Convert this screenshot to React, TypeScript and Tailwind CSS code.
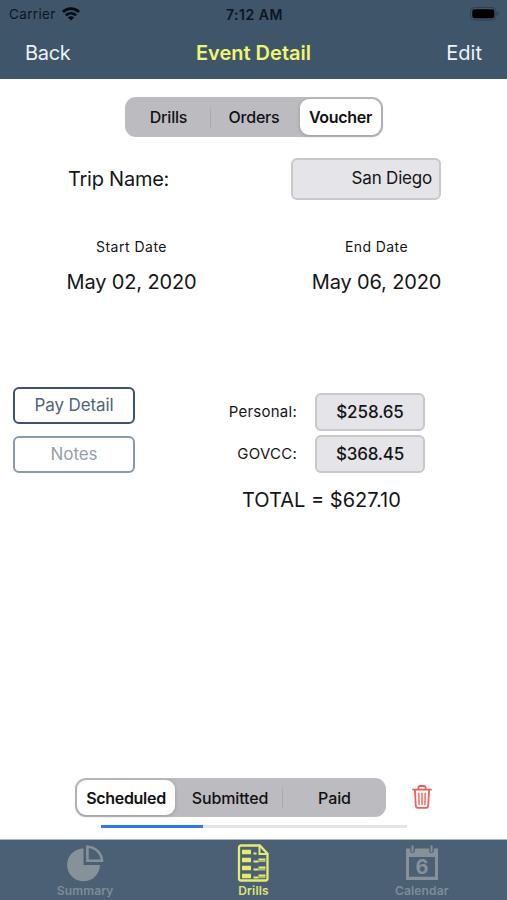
import { useState } from "react";
import { clsx } from "clsx";

type SegmentProps = {
  items: { label: string; width: string; text: string }[];
  value: string;
  onChange: (value: string) => void;
  className?: string;
};

function SegmentedControl({ items, value, onChange, className }: SegmentProps) {
  const active = items.findIndex((item) => item.label === value);

  return (
    <div className={clsx("flex rounded-[11px] bg-[#bcbbc0] p-[2px]", className)}>
      {items.map((item, index) => (
        <div key={item.label} className={clsx("flex items-center", item.width)}>
          <button
            type="button"
            onClick={() => onChange(item.label)}
            className={clsx(
              "h-full min-w-0 flex-1 whitespace-nowrap rounded-[9px] text-[16px] text-[#111113]",
              item.text,
              index === active
                ? "bg-white font-semibold shadow-[0_1px_4px_rgba(0,0,0,0.18)]"
                : "font-medium",
            )}
          >
            {item.label}
          </button>
          {index < items.length - 1 && index !== active && index + 1 !== active && (
            <span className="h-[21px] w-px bg-[#adacb2]" />
          )}
        </div>
      ))}
    </div>
  );
}

function WifiIcon() {
  return (
    <svg width="18" height="14" viewBox="0 0 18 14" fill="none">
      <path d="M1 5a11.4 11.4 0 0 1 16 0" stroke="#050a10" strokeWidth="2.7" />
      <path d="M3.9 8.3a7.2 7.2 0 0 1 10.2 0" stroke="#050a10" strokeWidth="2.4" />
      <path d="M9 13.6 5.9 10.5a4.4 4.4 0 0 1 6.2 0Z" fill="#050a10" />
    </svg>
  );
}

function BatteryIcon() {
  return (
    <svg width="30" height="14" viewBox="0 0 30 14">
      <rect x="0.5" y="0.5" width="25.5" height="12.5" rx="4" fill="none" stroke="#2f4051" />
      <rect x="2.3" y="2.3" width="22" height="9" rx="2.2" fill="#000" />
      <path d="M27.3 4.8c1.7.5 1.7 3.4 0 3.9Z" fill="#2a3a4b" />
    </svg>
  );
}

function TrashIcon() {
  return (
    <svg width="20" height="24" viewBox="0 0 20 24" fill="none" stroke="#ee5f57" strokeWidth="1.8" strokeLinecap="round" strokeLinejoin="round">
      <path d="M1 4.6h18" />
      <path d="M6.4 4.4V2.7c0-1.1.6-1.7 1.7-1.7h3.8c1.1 0 1.7.6 1.7 1.7v1.7" />
      <path d="m2.9 4.8.9 16c.1 1.4.8 2.1 2.1 2.1h8.2c1.3 0 2-.7 2.1-2.1l.9-16" />
      <path d="m6.8 8.2.3 11.4M10 8.2v11.4M13.2 8.2l-.3 11.4" strokeWidth="1.4" />
    </svg>
  );
}

function SummaryIcon() {
  return (
    <svg width="38" height="37" viewBox="0 0 38 37">
      <path d="M17.5 3.5v16.4h16.4A16.4 16.4 0 1 1 17.5 3.5Z" fill="#86919a" />
      <path d="M21.4 1.7v14h14.6c-.4-7.8-6.8-13.7-14.6-14Z" fill="none" stroke="#86919a" strokeWidth="2.6" />
    </svg>
  );
}

function DrillsIcon() {
  return (
    <svg width="33" height="38" viewBox="0 0 33 38" fill="none" stroke="#e5eb70">
      <path d="M4 1.5h18.8l7.7 8.2v24.8a2 2 0 0 1-2 2H4a2 2 0 0 1-2-2v-31a2 2 0 0 1 2-2Z" strokeWidth="2.3" />
      <path d="M22.5 2v8h8" strokeWidth="2" />
      <path d="M5 8h9M5 16h9M5 24h9M5 32h9" strokeWidth="4.4" />
      <path d="M16.5 9.5h3M16.5 17.5h5M21.5 15.3h7M16.5 25.5h5M21.5 23.5h7M16.5 33.5h5M21.5 31.5h7" strokeWidth="1.8" />
      <path d="M21.5 17.2h7M21.5 25.5h7M21.5 33.3h7" strokeWidth="1.8" opacity=".65" />
    </svg>
  );
}

function CalendarIcon() {
  return (
    <svg width="34" height="36" viewBox="0 0 34 36">
      <path
        d="M1 3.5h4.2v2.2c0 3.2 4.6 3.2 4.6 0V3.5h14.4v2.2c0 3.2 4.6 3.2 4.6 0V3.5H33V35H1ZM4 12v19.8h26V12Z"
        fill="#86919a"
        fillRule="evenodd"
      />
      <path d="M7.5 1.3v5M26.5 1.3v5" stroke="#86919a" strokeWidth="2" strokeLinecap="round" />
      <text x="17" y="29.2" textAnchor="middle" fontSize="20" fontWeight="700" fontFamily="Inter, sans-serif" fill="#86919a">
        6
      </text>
    </svg>
  );
}

const tripTabs = [
  { label: "Drills", width: "w-[84px]", text: "tracking-[-0.2px]" },
  { label: "Orders", width: "w-[89px]", text: "pr-[3px] tracking-[-0.2px]" },
  { label: "Voucher", width: "w-[81px]", text: "tracking-[-0.3px]" },
];

const statusTabs = [
  { label: "Scheduled", width: "w-[98px]", text: "tracking-[-0.3px]" },
  { label: "Submitted", width: "w-[108px]", text: "pl-[3px] tracking-[-0.15px]" },
  { label: "Paid", width: "w-[101px]", text: "pl-[2px] tracking-[-0.1px]" },
];

const statusProgress: Record<string, number> = { Scheduled: 33.3, Submitted: 66.6, Paid: 100 };

export default function App() {
  const [tab, setTab] = useState("Voucher");
  const [status, setStatus] = useState("Scheduled");

  return (
    <div className="flex h-[900px] w-[507px] flex-col overflow-hidden bg-white font-[Inter,sans-serif] text-[#151517]">
      <header className="h-[79px] bg-[#3e556a]">
        <div className="grid h-7 grid-cols-3 items-center pl-[9px] pr-[7px] text-[13.5px] text-[#0d151e]">
          <div className="flex items-center gap-[6px]">
            <span className="tracking-[0.35px]">Carrier</span>
            <WifiIcon />
          </div>
          <span className="text-center text-[14px] font-semibold tracking-[0.55px]">7:12 AM</span>
          <div className="flex justify-end">
            <BatteryIcon />
          </div>
        </div>
        <div className="grid h-[49px] grid-cols-3 items-center px-[25px] text-[20px]">
          <button type="button" className="text-left tracking-[-0.3px] text-[#edf2f6]">Back</button>
          <h1 className="whitespace-nowrap text-center font-semibold tracking-[0px] text-[#f0f573]">Event Detail</h1>
          <button type="button" className="text-right tracking-[0px] text-[#edf2f6]">Edit</button>
        </div>
      </header>

      <main className="flex flex-1 flex-col">
        <SegmentedControl items={tripTabs} value={tab} onChange={setTab} className="mt-[18px] ml-[125px] h-10 w-[258px]" />

        <div className="mt-[21px] flex h-[42px] items-center justify-between pl-[68px] pr-[66px]">
          <span className="text-[20px] tracking-[-0.25px]">Trip Name:</span>
          <div className="flex h-full w-[150px] items-center justify-end rounded-[6px] border-2 border-[#c8c8cb] bg-[#e5e4e9] pr-[7px] text-[17px] tracking-[-0.2px]">
            San Diego
          </div>
        </div>

        <div className="mt-[36px] flex justify-between pl-[66px] pr-[65px] text-center">
          <div className="w-[131px]">
            <p className="text-[14px] leading-[22px] tracking-[0.5px]">Start Date</p>
            <p className="mt-[9px] whitespace-nowrap text-[20px] leading-[30px] tracking-[-0.15px]">May 02, 2020</p>
          </div>
          <div className="w-[131px]">
            <p className="text-[14px] leading-[22px] tracking-[0.4px]">End Date</p>
            <p className="mt-[9px] whitespace-nowrap text-[20px] leading-[30px] tracking-[-0.15px]">May 06, 2020</p>
          </div>
        </div>

        <div className="mt-[90px] flex pl-[13px]">
          <div className="flex w-[122px] flex-col gap-3 text-[17px]">
            <button type="button" className="h-[37px] rounded-[6px] border-2 border-[#3d526b] pt-px tracking-[-0.1px] text-[#50637a]">
              Pay Detail
            </button>
            <button type="button" className="h-[37px] rounded-[6px] border-2 border-[#8b9aa7] pt-px tracking-[-0.1px] text-[#969fa9]">
              Notes
            </button>
          </div>

          <div className="ml-[80px] mt-[6px]">
            <div className="grid grid-cols-[82px_110px] items-center gap-x-[18px] gap-y-1">
              <span className="text-right text-[15px] tracking-[0.25px]">Personal:</span>
              <div className="flex h-[38px] items-center justify-center rounded-[6px] border-2 border-[#c8c8cb] bg-[#e5e4e9] pt-px text-[17px] font-medium tracking-[-0.1px]">
                $258.65
              </div>
              <span className="text-right text-[15px] tracking-[0.25px]">GOVCC:</span>
              <div className="flex h-[38px] items-center justify-center rounded-[6px] border-2 border-[#c8c8cb] bg-[#e5e4e9] pt-px text-[17px] font-medium tracking-[-0.2px]">
                $368.45
              </div>
            </div>
            <p className="mt-[12px] pl-[27px] text-[20px] leading-[30px] tracking-[0px]">TOTAL = $627.10</p>
          </div>
        </div>

        <div className="mt-auto flex items-center pl-[75px]">
          <SegmentedControl items={statusTabs} value={status} onChange={setStatus} className="h-[39px] w-[311px]" />
          <button type="button" aria-label="Delete" className="ml-[26px] -mt-[2px]">
            <TrashIcon />
          </button>
        </div>
        <div className="mt-2 mb-[11px] ml-[101px] h-[3px] w-[306px] bg-[#e5e5e6]">
          <div className="h-full bg-[#2f78e8]" style={{ width: `${statusProgress[status]}%` }} />
        </div>
      </main>

      <nav className="grid h-[61px] grid-cols-3 border-t border-[#aeb8c1] bg-[#4b6074] px-px text-[12px] font-semibold tracking-[0.15px] text-[#7f8b96]">
        <a className="flex flex-col items-center">
          <span className="flex h-[42px] items-center pt-1"><SummaryIcon /></span>
          <span className="leading-[18px]">Summary</span>
        </a>
        <a className="flex flex-col items-center text-[#dfe574]">
          <span className="flex h-[42px] items-center pt-1"><DrillsIcon /></span>
          <span className="leading-[18px]">Drills</span>
        </a>
        <a className="flex flex-col items-center">
          <span className="flex h-[42px] items-center pt-1"><CalendarIcon /></span>
          <span className="leading-[18px]">Calendar</span>
        </a>
      </nav>
    </div>
  );
}
